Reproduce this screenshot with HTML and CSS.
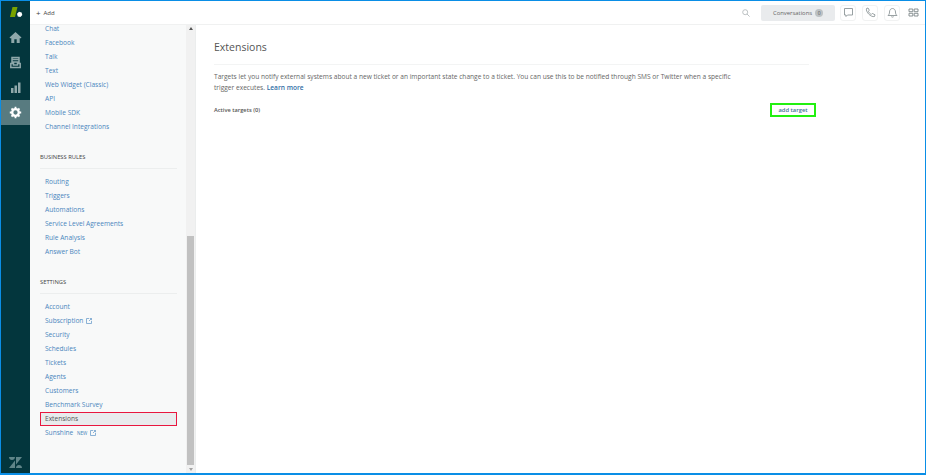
FILE: index.html
```html
<!DOCTYPE html>
<html lang="en">
<head>
<meta charset="utf-8">
<title>Extensions</title>
<link rel="stylesheet" href="styles.css">
</head>
<body>
<div class="app">
  <nav class="rail">
    <div class="rail-logo">
      <svg width="14" height="12" viewBox="0 0 14 12"><path d="M3.500 0H8.500L6 10H1Z" fill="#78a300"/><path d="M10 4.800l2.600.8.700 2.400-1.900 2-2.600-.6-.8-2.600z" fill="#fff"/></svg>
    </div>
    <div class="rail-item">
      <svg width="13" height="13" viewBox="0 0 13 13"><path d="M6.500 1L0.500 6.600l.7.7H2.300V12h3V8.300h2.400V12h3V7.300h1.100l.7-.7z" fill="#8fa8ab"/></svg>
    </div>
    <div class="rail-item">
      <svg width="13" height="13" viewBox="0 0 13 13"><path d="M3 1.500h7v4.500H3zM3 3.500h7M1.800 7.500v4h9.400v-4H8.500v1.500h-4V7.500z" fill="none" stroke="#8fa8ab" stroke-width="1.500"/></svg>
    </div>
    <div class="rail-item">
      <svg width="13" height="13" viewBox="0 0 13 13"><path d="M2 7h2.500v5H2zM5.500 4.500H8V12H5.500zM9 1.500h2.500V12H9z" fill="#8fa8ab"/></svg>
    </div>
    <div class="rail-item rail-active">
      <svg width="13" height="13" viewBox="0 0 13 13"><circle cx="6.500" cy="6.500" r="3.300" fill="none" stroke="#fff" stroke-width="2.300"/><path d="M6.500.8v2M6.500 10.200v2M.8 6.500h2M10.200 6.500h2M2.500 2.500l1.400 1.400M9.100 9.100l1.400 1.400M2.500 10.500l1.400-1.400M9.100 3.900l1.400-1.400" stroke="#fff" stroke-width="1.800"/></svg>
    </div>
    <div class="rail-foot">
      <svg width="13" height="11" viewBox="0 0 13 11"><path d="M0 0H6C6 1.700 4.600 3 3 3S0 1.700 0 0ZM6 3.500V11H0ZM7 0V7.500L13 0ZM7 11C7 9.300 8.400 8 10 8S13 9.300 13 11Z" fill="#5f8589"/></svg>
    </div>
  </nav>
  <div class="main">
    <header class="topbar">
      <div class="add"><span class="add-plus">+</span><span>Add</span></div>
      <div class="top-right">
        <svg class="search" width="8" height="8" viewBox="0 0 8 8"><circle cx="3.200" cy="3.200" r="2.500" fill="none" stroke="#b5bbbd" stroke-width=".9"/><path d="M5 5l2.600 2.600" stroke="#b5bbbd" stroke-width=".9"/></svg>
        <div class="conv">Conversations <span class="conv-badge">0</span></div>
        <div class="tool">
          <svg width="11" height="11" viewBox="0 0 11 11"><path d="M1.500 1.500h8v6.500H4.500L3 9.500V8H1.500z" fill="none" stroke="#8d9699" stroke-width=".9"/></svg>
        </div>
        <div class="tool">
          <svg width="11" height="11" viewBox="0 0 11 11"><path d="M1.500 1.500L3 1l1.300 2.200-1 1c.5 1.300 1.600 2.500 3 3.200l1-1L10 7.800 9.500 9.500C6 10.500 .5 5 1.500 1.500z" fill="none" stroke="#8d9699" stroke-width=".9"/></svg>
        </div>
        <div class="tool">
          <svg width="11" height="11" viewBox="0 0 11 11"><path d="M1 8.500c1.200-1 1.500-2 1.500-3.500 0-2 1.300-3.500 3-3.500s3 1.500 3 3.500c0 1.500.3 2.500 1.500 3.500zM4.300 9.500c.4.800 2 .8 2.400 0" fill="none" stroke="#8d9699" stroke-width=".9"/></svg>
        </div>
        <div class="apps">
          <svg width="11" height="9" viewBox="0 0 11 9"><path d="M1 1h3.800v2.700H1zM6.200 1H10v2.700H6.200zM1 5.300h3.800V8H1zM6.200 5.300H10V8H6.200z" fill="none" stroke="#7d8789" stroke-width=".9"/></svg>
        </div>
      </div>
    </header>
    <div class="body">
      <aside class="side">
        <div class="side-scroll">
          <ul class="links links-first">
            <li><a>Chat</a></li>
            <li><a>Facebook</a></li>
            <li><a>Talk</a></li>
            <li><a>Text</a></li>
            <li><a>Web Widget (Classic)</a></li>
            <li><a>API</a></li>
            <li><a>Mobile SDK</a></li>
            <li><a>Channel Integrations</a></li>
          </ul>
          <h3 class="group">BUSINESS RULES</h3>
          <ul class="links">
            <li><a>Routing</a></li>
            <li><a>Triggers</a></li>
            <li><a>Automations</a></li>
            <li><a>Service Level Agreements</a></li>
            <li><a>Rule Analysis</a></li>
            <li><a>Answer Bot</a></li>
          </ul>
          <h3 class="group">SETTINGS</h3>
          <ul class="links">
            <li><a>Account</a></li>
            <li><a>Subscription</a>
              <svg class="ext" width="6" height="6" viewBox="0 0 6 6"><path d="M3 .5H.5v5h5V3M3 3L5.500.5M3.800.5h1.700v1.700" fill="none" stroke="#6f9fcc" stroke-width=".8"/></svg></li>
            <li><a>Security</a></li>
            <li><a>Schedules</a></li>
            <li><a>Tickets</a></li>
            <li><a>Agents</a></li>
            <li><a>Customers</a></li>
            <li><a>Benchmark Survey</a></li>
            <li class="current"><a>Extensions</a></li>
            <li><a>Sunshine</a> <span class="new">NEW</span>
              <svg class="ext" width="6" height="6" viewBox="0 0 6 6"><path d="M3 .5H.5v5h5V3M3 3L5.500.5M3.800.5h1.700v1.700" fill="none" stroke="#6f9fcc" stroke-width=".8"/></svg></li>
          </ul>
        </div>
        <div class="scrollbar">
          <span class="arrow-up"></span>
          <span class="thumb"></span>
          <span class="arrow-down"></span>
        </div>
      </aside>
      <main class="content">
        <h1 class="title">Extensions</h1>
        <p class="intro">Targets let you notify external systems about a new ticket or an important state change to a ticket. You can use this to be notified through SMS or Twitter when a specific trigger executes. <a class="more">Learn more</a></p>
        <div class="targets">
          <span class="targets-label">Active targets (0)</span>
          <button class="add-target">add target</button>
        </div>
      </main>
    </div>
  </div>
</div>
</body>
</html>
```

FILE: styles.css
```css
* { box-sizing: border-box; }
html, body { margin: 0; height: 100%; }
body {
  font-family: "Open Sans", "Liberation Sans", sans-serif;
  font-size: 6.600px;
  color: #555;
  background: #fff;
}
.app {
  display: flex;
  width: 926px;
  height: 475px;
  border: 1px solid #0a8ee6;
  border-bottom-width: 2px;
  overflow: hidden;
}
.rail {
  width: 29px;
  flex: none;
  background: #03363d;
  display: flex;
  flex-direction: column;
}
.rail-logo {
  height: 24px;
  display: flex;
  align-items: center;
  justify-content: center;
}
.rail-item {
  height: 25px;
  display: flex;
  align-items: center;
  justify-content: center;
}
.rail-active { background: #587b80; }
.rail-foot {
  margin-top: auto;
  padding-bottom: 5px;
  display: flex;
  justify-content: center;
}
.main {
  flex: 1;
  min-width: 0;
  display: flex;
  flex-direction: column;
}
.topbar {
  height: 24px;
  flex: none;
  display: flex;
  align-items: center;
  justify-content: space-between;
  border-bottom: 1px solid #f0f1f1;
  padding-left: 6px;
}
.add { display: flex; align-items: center; gap: 3px; font-size: 6px; color: #444; }
.add-plus { font-size: 8px; line-height: 10px; }
.top-right { display: flex; align-items: center; }
.search { margin-right: 11px; }
.conv {
  width: 74px;
  height: 16px;
  background: #e9ebed;
  border-radius: 2px;
  display: flex;
  align-items: center;
  justify-content: center;
  gap: 3px;
  font-size: 5.900px;
  color: #666;
  margin-right: 5px;
}
.conv-badge {
  width: 8px;
  height: 8px;
  border-radius: 50%;
  background: #bcc1c4;
  font-size: 5px;
  display: flex;
  align-items: center;
  justify-content: center;
  color: #555;
}
.tool {
  width: 16px;
  height: 16px;
  border: 1px solid #f1f2f2;
  border-radius: 3px;
  margin-right: 6px;
  display: flex;
  align-items: center;
  justify-content: center;
}
.apps { width: 11px; height: 16px; margin: 0 6px 0 2px; display: flex; align-items: center; justify-content: center; }
.body { flex: 1; display: flex; min-height: 0; }
.side {
  width: 166px;
  flex: none;
  display: flex;
  background: #f8f9f9;
  border-right: 1px solid #ebeded;
}
.side-scroll { flex: 1; min-width: 0; padding: 0 9px 0 10px; }
.links { list-style: none; margin: 0; padding: 0; }
.links-first { margin-top: -3px; }
.links li {
  height: 14px;
  line-height: 14px;
  padding-left: 5px;
  white-space: nowrap;
}
.links a { color: #4a86bd; }
.ext { vertical-align: -0.500px; margin-left: 1px; }
.new { font-size: 4.600px; color: #3f7fb8; margin-left: 2px; }
.links .current {
  background: #e9ebed;
  outline: 1.500px solid #e8173f;
  outline-offset: -1px;
}
.links .current a { color: #555; }
.group {
  margin: 17px 0 6px;
  padding: 0 0 6px;
  height: 18px;
  line-height: 12px;
  font-size: 5.800px;
  font-weight: 400;
  color: #444;
  border-bottom: 1px solid #eceeee;
}
.scrollbar {
  width: 9px;
  flex: none;
  background: #f1f1f1;
  display: flex;
  flex-direction: column;
  align-items: center;
}
.arrow-up, .arrow-down { width: 0; height: 0; border: 2px solid transparent; }
.arrow-up { border-top: 0; border-bottom: 3px solid #555; margin-top: 2px; }
.thumb { width: 7px; height: 229px; background: #c1c1c1; margin-top: auto; }
.arrow-down { border-bottom: 0; border-top: 3px solid #a3a3a3; margin: 3px 0 2px; }
.content { flex: 1; padding: 0 0 0 18px; min-width: 0; }
.title {
  width: 595px;
  margin: 0;
  padding: 14px 0 9px;
  height: 40px;
  font-size: 10.500px;
  font-weight: 400;
  line-height: 17px;
  color: #555;
  border-bottom: 1px solid #f3f4f4;
}
.intro {
  width: 530px;
  margin: 6px 0 0;
  font-size: 6.600px;
  line-height: 11px;
  color: #666;
}
.more { color: #2f6ea5; font-weight: 600; }
.targets {
  width: 602px;
  display: flex;
  align-items: center;
  justify-content: space-between;
  margin-top: 10px;
}
.targets-label { font-size: 5.700px; font-weight: 600; color: #555; }
.add-target {
  width: 46px;
  height: 14px;
  padding: 0;
  border: 2px solid #22f010;
  background: #fff;
  font: 600 5.800px "Open Sans", "Liberation Sans", sans-serif;
  color: #3f6f96;
}
```
